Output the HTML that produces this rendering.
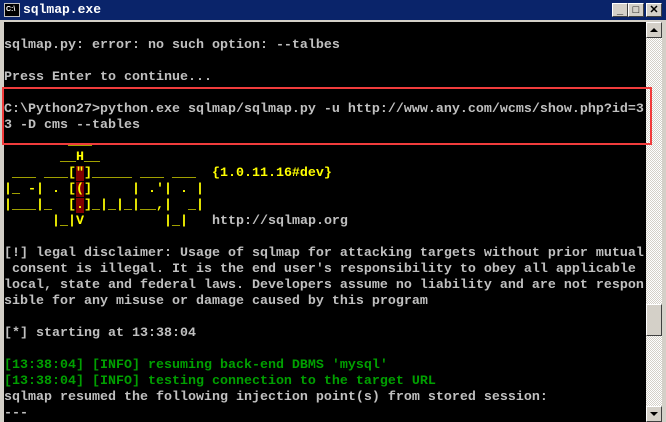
<!DOCTYPE html>
<html><head><meta charset="utf-8"><style>
*{margin:0;padding:0;box-sizing:border-box}
body{width:666px;height:422px;overflow:hidden;background:#d4d0c8;position:relative;font-family:"Liberation Mono",monospace}
#title{position:absolute;left:0;top:0;width:666px;height:20px;background:#0a246a}
#title .ic{position:absolute;left:4px;top:3px;width:16px;height:14px;background:#000;border:1px solid #c0c0c0;color:#fff;font:bold 7px "Liberation Sans",sans-serif;line-height:12px;padding-left:1px}
#title .t{position:absolute;left:23px;top:2px;color:#fff;font:bold 13px "Liberation Mono",monospace}
.btn{position:absolute;top:3px;width:16px;height:14px;background:#d4d0c8;border:1px solid;border-color:#fff #404040 #404040 #fff;font:bold 11px "Liberation Sans",sans-serif;text-align:center;line-height:12px;color:#000}
#con{position:absolute;left:4px;top:22px;width:642px;height:400px;background:#000;overflow:hidden}
pre{font-family:"Liberation Mono",monospace;font-size:13.33px;line-height:16px;color:#c0c0c0;font-weight:bold;white-space:pre}
.y{color:#ffff00}.g{color:#00a000}.r{background:#800000}
#sb{position:absolute;left:646px;top:22px;width:16px;height:400px;background:repeating-conic-gradient(#fff 0 25%,#d4d0c8 0 50%) 0 0/2px 2px}
.ar{position:absolute;left:0;width:16px;height:16px;background:#d4d0c8;border:1px solid;border-color:#fff #404040 #404040 #fff}
#box{position:absolute;left:2px;top:87px;width:650px;height:58px;border:2px solid #f03c3c}
</style></head><body>
<div id="title"><div class="ic">C:\</div><div class="t">sqlmap.exe</div>
<div class="btn" style="left:612px">_</div><div class="btn" style="left:628px">□</div><div class="btn" style="left:646px">✕</div></div>
<div id="con"><pre>

sqlmap.py: error: no such option: --talbes

Press Enter to continue...

C:\Python27>python.exe sqlmap/sqlmap.py -u http://www.any.com/wcms/show.php?id=3
3 -D cms --tables
<span class="y">        ___
       __H__
 ___ ___[<span class="r">"</span>]_____ ___ ___  {1.0.11.16#dev}
|_ -| . [<span class="r">(</span>]     | .'| . |
|___|_  [<span class="r">.</span>]_|_|_|__,|  _|
      |_|V          |_|</span>   http://sqlmap.org

[!] legal disclaimer: Usage of sqlmap for attacking targets without prior mutual
 consent is illegal. It is the end user's responsibility to obey all applicable
local, state and federal laws. Developers assume no liability and are not respon
sible for any misuse or damage caused by this program

[*] starting at 13:38:04

<span class="g">[13:38:04] [INFO] resuming back-end DBMS 'mysql'
[13:38:04] [INFO] testing connection to the target URL</span>
sqlmap resumed the following injection point(s) from stored session:
---
</pre></div>
<div id="sb"><div class="ar" style="top:0"><svg width="14" height="14" style="position:absolute;left:0;top:0"><path d="M3 9h8L7 5z" fill="#000"/></svg></div>
<div class="ar" style="top:282px;height:32px"></div>
<div class="ar" style="top:384px"><svg width="14" height="14" style="position:absolute;left:0;top:0"><path d="M3 5h8L7 9z" fill="#000"/></svg></div></div>
<div id="box"></div>
</body></html>
